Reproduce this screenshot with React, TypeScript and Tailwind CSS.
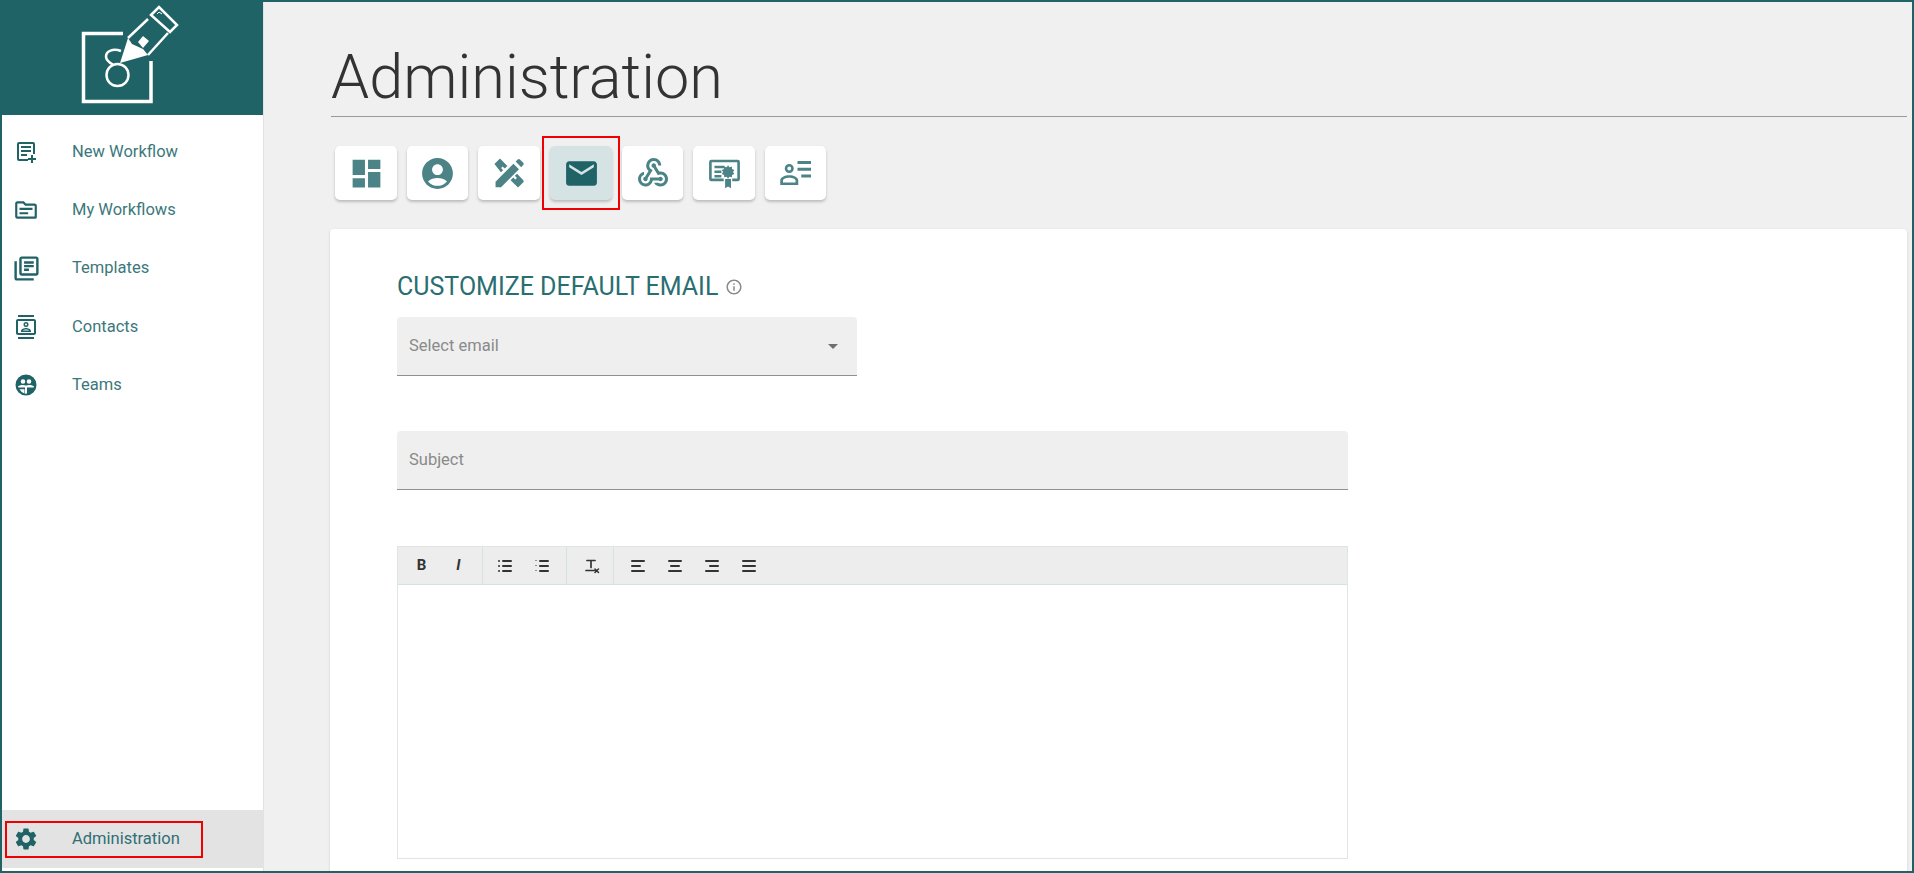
import React from 'react';
import {
  MdAccountCircle,
  MdDashboard,
  MdEmail,
  MdOutlineContacts,
  MdOutlineInfo,
  MdOutlineLibraryBooks,
  MdOutlineTopic,
  MdOutlineWebhook,
  MdSettings,
} from 'react-icons/md';

const NewWorkflowIcon = () => (
  <svg viewBox="0 0 24 24" className="w-6 h-6" fill="currentColor">
    <path d="M5 2h14a2 2 0 0 1 2 2v10h-2V4H5v15h9v2H5a2 2 0 0 1-2-2V4a2 2 0 0 1 2-2zm2 4h10v2H7V6zm0 4h10v2H7v-2zm0 4h6v2H7v-2zm12 1v3h3v2h-3v3h-2v-3h-3v-2h3v-3h2z" />
  </svg>
);

const TeamsIcon = () => (
  <svg viewBox="0 0 24 24" className="w-6 h-6" fill="currentColor">
    <path fillRule="evenodd" d="M12 1.500a10.500 10.500 0 1 1 0 21 10.500 10.500 0 0 1 0-21zM9 6.200a2.300 2.300 0 1 0 0 4.600 2.300 2.300 0 0 0 0-4.600zm6 0a2.300 2.300 0 1 0 0 4.600 2.300 2.300 0 0 0 0-4.600zM4 13.200c1.600-.9 3.300-1.200 5-1.200 1.100 0 2.100.2 3 .6.9-.4 1.900-.6 3-.6 1.700 0 3.400.3 5 1.200l-.4 1.300-6.600 0V20.500l-2 .2v-6.200H4.400L4 13.200zm1.500 3a8.700 8.700 0 0 0 5 4.200v-4.200h-5z" />
  </svg>
);

const DesignIcon = () => (
  <svg viewBox="0 0 24 24" className="w-[38px] h-[38px]" fill="currentColor">
    <path d="M3.500 21v-3.500L14.800 6.200l3.500 3.500L7 21H3.500z" />
    <path d="M16.200 4.800l1.300-1.300a1 1 0 0 1 1.400 0l2.100 2.100a1 1 0 0 1 0 1.400l-1.300 1.300-3.500-3.500z" />
    <path d="M2.800 6.300l3.500-3.500 4.700 4.700-1.700 1.700-1.300-1.300-1 1 1.300 1.300-1.400 1.400L2.800 6.300z" />
    <path d="M21.200 17.700l-3.500 3.500-4.700-4.700 1.700-1.700 1.300 1.300 1-1-1.300-1.300 1.400-1.400 4.100 4.300z" />
  </svg>
);

const CertificateIcon = () => (
  <svg viewBox="0 0 24 24" className="w-[37px] h-[37px]" fill="currentColor">
    <path d="M3.500 3h17A1.500 1.500 0 0 1 22 4.500v11a1.500 1.500 0 0 1-1.500 1.500H17v-1.700h3.300V4.700H3.700v10.600h7.800V17h-8A1.500 1.500 0 0 1 2 15.500v-11A1.500 1.500 0 0 1 3.500 3z" />
    <path d="M5.500 7H12v1.600H5.500V7zm0 3H10v1.600H5.500V10zm0 3H10v1.600H5.500V13z" />
    <path d="M14.300 6.600l.9 1.300 1.600-.4.1 1.600 1.500.6-.9 1.300.9 1.300-1.500.6-.1 1.600-1.600-.4-.9 1.300-.9-1.300-1.600.4-.1-1.600-1.500-.6.9-1.300-.9-1.300 1.500-.6.1-1.600 1.600.4.9-1.300z" />
    <path d="M12.400 15.500h3.800v6l-1.900-1-1.900 1v-6z" />
  </svg>
);

const PersonListIcon = () => (
  <svg viewBox="0 0 24 24" className="w-[36px] h-[36px]" fill="currentColor">
    <path d="M13 4h9v2h-9V4zm0 4.500h9v2h-9v-2zm2.500 4.500H22v2h-6.500v-2z" />
    <path fillRule="evenodd" d="M7.500 6a3 3 0 1 1 0 6 3 3 0 0 1 0-6zm0 1.700a1.300 1.300 0 1 0 0 2.600 1.300 1.300 0 0 0 0-2.600zM7.500 13.500c3 0 6 1.300 6 3.500v3h-12v-3c0-2.200 3-3.500 6-3.500zm0 1.700c-2.200 0-4.200.9-4.200 1.800v1.300h8.400V17c0-.9-2-1.800-4.200-1.800z" />
  </svg>
);

// logo is drawn in page coordinates, viewBox starts where the svg sits
const Logo = () => (
  <svg viewBox="78 2 110 105" className="w-[110px] h-[105px]" fill="none" stroke="white">
    <path d="M123 33.500H83.500V101.500H151V61" strokeWidth="3.500" />
    <path d="M128 38 148 19" strokeWidth="2.500" />
    <path d="M148 55 168 33" strokeWidth="2.500" />
    <path d="M120 63 128 38 132 44 143 49 148 55z" fill="white" stroke="none" />
    <path d="M138 42 143 36 149 41 143 48z" fill="white" stroke="none" />
    <path d="M151 15 159 7 177 25 170 32z" strokeWidth="2.500" />
    <path d="M157 14l2-2 3 2" strokeWidth="1" />
    <path d="M121 51c-8-3-15 0-15 5.500 0 3.500 3 6 7 8" strokeWidth="2.500" />
    <circle cx="117.500" cy="75" r="11" strokeWidth="2.500" />
  </svg>
);

const navItems = [
  { label: 'New Workflow', icon: <NewWorkflowIcon /> },
  { label: 'My Workflows', icon: <MdOutlineTopic className="w-[26px] h-[26px]" /> },
  { label: 'Templates', icon: <MdOutlineLibraryBooks className="w-[29px] h-[29px]" /> },
  { label: 'Contacts', icon: <MdOutlineContacts className="w-6 h-6" /> },
  { label: 'Teams', icon: <TeamsIcon /> },
];

const tabs = [
  { icon: <MdDashboard className="w-[37px] h-[37px]" />, w: 'w-[62px]' },
  { icon: <MdAccountCircle className="w-[37px] h-[37px]" />, w: 'w-[61px]' },
  { icon: <DesignIcon />, w: 'w-[62px]' },
  { icon: <MdEmail className="w-[37px] h-[37px]" />, w: 'w-[62px]', active: true },
  { icon: <MdOutlineWebhook className="w-[36px] h-[36px]" />, w: 'w-[61px]' },
  { icon: <CertificateIcon />, w: 'w-[62px]' },
  { icon: <PersonListIcon />, w: 'w-[61px]' },
];

const QuillGlyph = ({ children }: { children: React.ReactNode }) => (
  <svg viewBox="0 0 18 18" className="w-[18px] h-[18px]" fill="none" stroke="#333" strokeWidth="2" strokeLinecap="round">
    {children}
  </svg>
);

const ToolButton = ({ children }: { children: React.ReactNode }) => (
  <span className="w-[37px] flex items-center justify-center">{children}</span>
);

const Toolbar = () => (
  <div className="h-[38px] flex bg-[#ededed] border-b border-[#d5e2e2]">
    <div className="flex items-center pl-[5px] pr-[5px] border-r border-[#d5e2e2]">
      <ToolButton>
        <span className="text-[15px] font-bold text-[#333]">B</span>
      </ToolButton>
      <ToolButton>
        <span className="text-[15px] font-bold italic text-[#333]">I</span>
      </ToolButton>
    </div>
    <div className="flex items-center pl-[3px] pr-[6px] border-r border-[#d5e2e2]">
      <ToolButton>
        <QuillGlyph>
          <path d="M7 4h8M7 9h8M7 14h8M3 4h.01M3 9h.01M3 14h.01" />
        </QuillGlyph>
      </ToolButton>
      <ToolButton>
        <QuillGlyph>
          <path d="M7 4h8M7 9h8M7 14h8" />
          <path d="M3 3v2M3 8v2M3 13v2" strokeWidth="1" strokeDasharray="1 1" strokeLinecap="butt" />
        </QuillGlyph>
      </ToolButton>
    </div>
    <div className="flex items-center pl-[6px] pr-[3px] border-r border-[#d5e2e2]">
      <ToolButton>
        <QuillGlyph>
          <path d="M4 3.500h8M8 3.500v7M3 13.500h10" strokeWidth="1.700" />
          <path d="M12 12l3.500 3.500M15.500 12L12 15.500" strokeWidth="1.500" />
        </QuillGlyph>
      </ToolButton>
    </div>
    <div className="flex items-center pl-[5px]">
      <ToolButton>
        <QuillGlyph>
          <path d="M3 4h12M3 9h8M3 14h12" />
        </QuillGlyph>
      </ToolButton>
      <ToolButton>
        <QuillGlyph>
          <path d="M3 4h12M5 9h8M3 14h12" />
        </QuillGlyph>
      </ToolButton>
      <ToolButton>
        <QuillGlyph>
          <path d="M3 4h12M7 9h8M3 14h12" />
        </QuillGlyph>
      </ToolButton>
      <ToolButton>
        <QuillGlyph>
          <path d="M3 4h12M3 9h12M3 14h12" />
        </QuillGlyph>
      </ToolButton>
    </div>
  </div>
);

export default function App() {
  return (
    <div className="relative h-[873px] overflow-hidden border-2 border-[#1f6367] flex bg-[#f0f0f0] font-['Roboto',sans-serif]">
      <aside className="w-[262px] shrink-0 flex flex-col bg-white border-r border-[#e2e2e2]">
        <div className="h-[113px] shrink-0 bg-[#1f6367] pl-[76px]">
          <Logo />
        </div>
        <nav className="flex-1 pt-[8px]">
          {navItems.map((item) => (
            <div key={item.label} className="h-[58.300px] flex items-center text-[#3b787b]">
              <span className="w-[44px] ml-[2px] flex justify-center text-[#1f6367]">{item.icon}</span>
              <span className="ml-[24px] text-[16.500px]">{item.label}</span>
            </div>
          ))}
        </nav>
        <div className="h-[58px] mb-[3px] flex items-center bg-[#e3e3e3] text-[#2f6f73]">
          <span className="w-[44px] ml-[2px] flex justify-center text-[#1f6367]">
            <MdSettings className="w-[26px] h-[26px]" />
          </span>
          <span className="ml-[24px] text-[16.500px]">Administration</span>
        </div>
      </aside>

      <main className="flex-1 min-w-0 pl-[66px] pr-[5px]">
        <h1 className="h-[115px] pt-[39px] ml-[1px] border-b border-[#9a9a9a] text-[61.200px] leading-[72px] font-light text-[#333333]">
          Administration
        </h1>
        <div className="h-[112px] pt-[29px] pl-[5px] flex gap-[10px]">
          {tabs.map((tab, i) => (
            <div
              key={i}
              className={`${tab.w} h-[54px] rounded-[5px] flex items-center justify-center shadow-[0_2px_3px_rgba(0,0,0,0.22)] ${
                tab.active ? 'bg-[#d6e3e4] text-[#1f6367]' : 'bg-white text-[#4c8386]'
              }`}
            >
              {tab.icon}
            </div>
          ))}
        </div>
        <section className="bg-white rounded-t-[4px] h-[700px] pl-[67px] pt-[42px] shadow-[0_1px_3px_rgba(0,0,0,0.12)]">
          <div className="flex items-center h-[32px]">
            <h2 className="text-[25px] text-[#2a6e71]">CUSTOMIZE DEFAULT EMAIL</h2>
            <MdOutlineInfo className="ml-[7px] w-[18px] h-[18px] text-[#8a8a8a]" />
          </div>
          <div className="mt-[14px] w-[460px] h-[59px] px-[12px] flex items-center justify-between rounded-t-[4px] bg-[#efefef] border-b border-[#8f8f8f] text-[16.500px] text-[#8a8a8a]">
            <span>Select email</span>
            <span className="mr-[7px] w-0 h-0 border-x-[5px] border-x-transparent border-t-[5px] border-t-[#6f6f6f]" />
          </div>
          <div className="mt-[55px] w-[951px] h-[59px] px-[12px] flex items-center rounded-t-[4px] bg-[#efefef] border-b border-[#8f8f8f] text-[16.500px] text-[#8a8a8a]">
            Subject
          </div>
          <div className="mt-[56px] w-[951px] h-[313px] border border-[#dde5e5]">
            <Toolbar />
          </div>
        </section>
      </main>

      <div className="absolute left-[540px] top-[134px] w-[78px] h-[74px] border-2 border-[#f00000]" />
      <div className="absolute left-[3px] top-[819px] w-[198px] h-[37px] border-2 border-[#f00000]" />
    </div>
  );
}
